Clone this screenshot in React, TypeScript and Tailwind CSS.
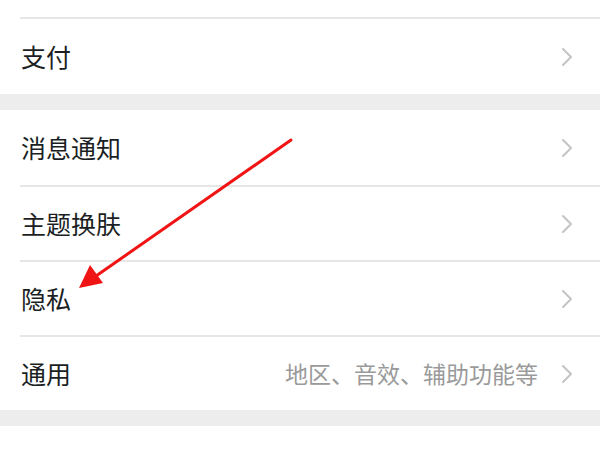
import React from "react";

const Chevron = () => (
  <svg width="12" height="20" viewBox="0 0 12 20" className="shrink-0">
    <path d="M2 2 L10 10 L2 18" fill="none" stroke="#c4c4c4" strokeWidth="2" strokeLinecap="round" strokeLinejoin="round" />
  </svg>
);

const Row = ({ label, hint, divider, tall }: { label: string; hint?: string; divider?: boolean; tall?: boolean }) => (
  <div className="flex flex-col">
    {divider && <div className="ml-5 h-[2px] bg-[#e6e6e6]" />}
    <div className={`flex items-center pl-[21px] pr-[27px] ${tall ? "h-[75px]" : "h-[73px]"}`}>
      <span className="flex-1 text-[25px] text-[#1b1f24]">{label}</span>
      {hint && <span className="mr-[23px] text-[23px] text-[#9a9a9a]">{hint}</span>}
      <Chevron />
    </div>
  </div>
);

export default function App() {
  return (
    <div
      className="relative h-[450px] w-[600px] overflow-hidden bg-white"
      style={{ fontFamily: '"Noto Sans CJK SC", "Noto Sans", sans-serif' }}
    >
      <div className="h-[17px]" />
      <Row label="支付" divider tall />
      <div className="h-[16px] bg-[#ededed]" />
      <Row label="消息通知" tall />
      <Row label="主题换肤" divider />
      <Row label="隐私" divider />
      <Row label="通用" hint="地区、音效、辅助功能等" divider />
      <div className="h-[16px] bg-[#ededed]" />
      <svg className="pointer-events-none absolute left-0 top-0" width="600" height="450">
        <line x1="291" y1="140" x2="96" y2="276" stroke="#f01414" strokeWidth="3" strokeLinecap="round" />
        <polygon points="79,288 90,265 103,283" fill="#f01414" />
      </svg>
    </div>
  );
}
